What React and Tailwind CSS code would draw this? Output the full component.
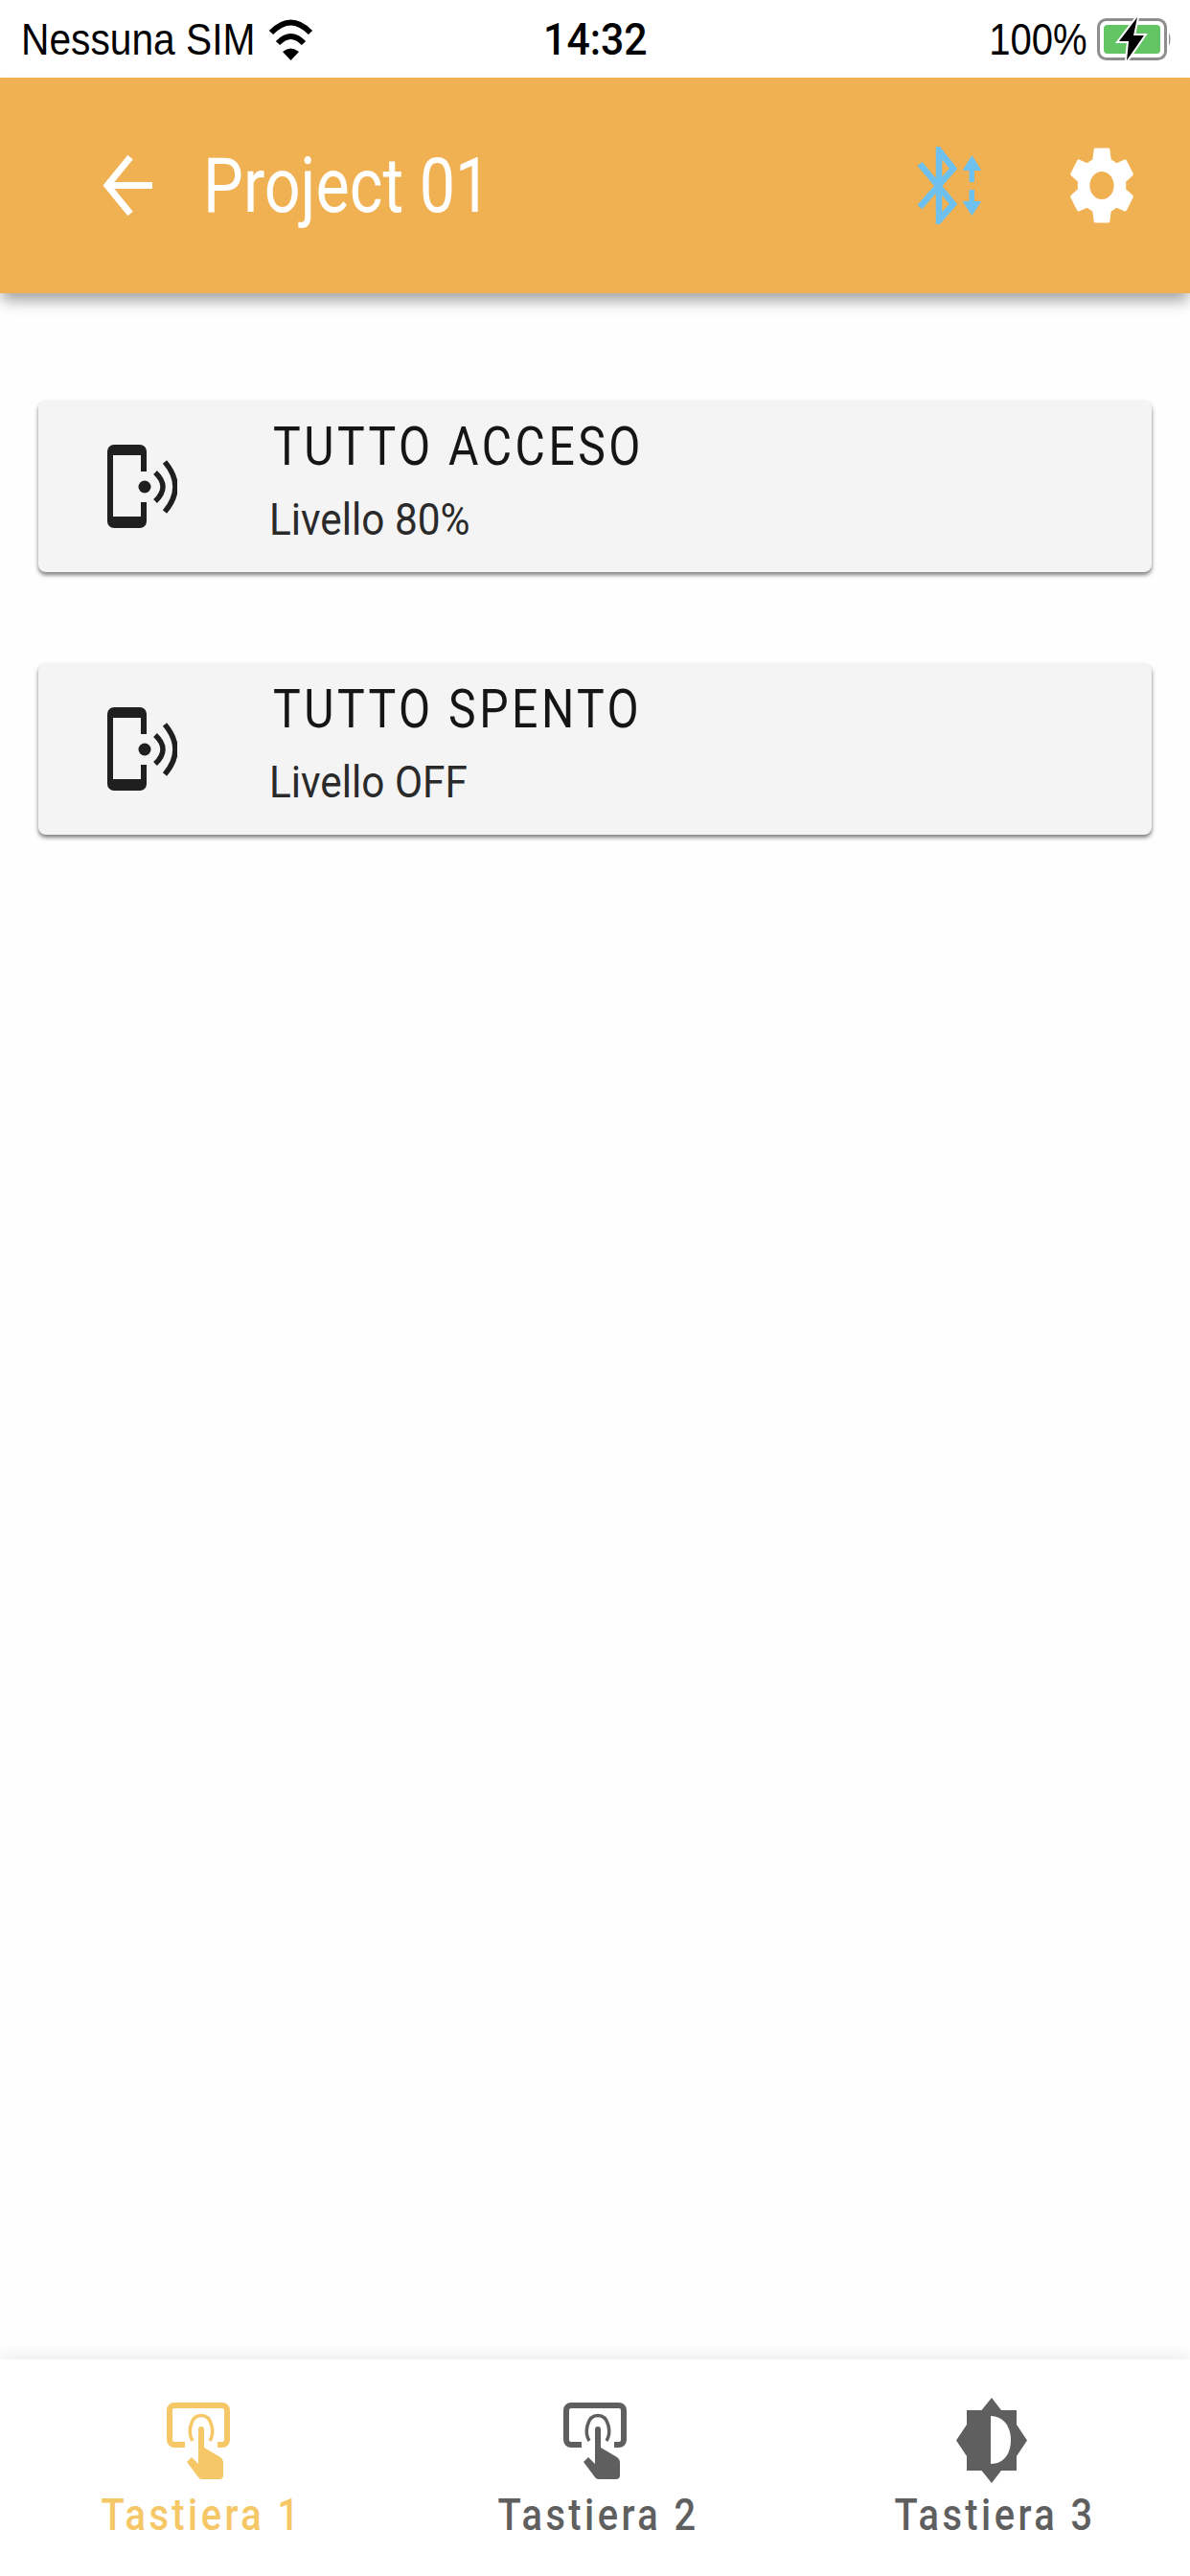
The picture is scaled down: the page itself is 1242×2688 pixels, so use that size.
import React from 'react'

const roboto = 'font-[Roboto,sans-serif]'
const helvetica = "font-['Liberation_Sans',Arial,sans-serif]"

function Wifi() {
  return (
    <svg width="49" height="44" viewBox="0 0 49 44" className="ml-[20px]">
      <path d="M4 15Q24.5 -6 45 15" fill="none" stroke="#000" strokeWidth="6" />
      <path d="M11 26Q24.5 12 38 26" fill="none" stroke="#000" strokeWidth="6" />
      <path d="M16 35Q24.5 28 33 35L24.5 44Z" fill="#000" />
    </svg>
  )
}

function Battery() {
  return (
    <svg width="79" height="46" viewBox="0 0 79 46" className="ml-[10px]">
      <rect x="1.5" y="2.5" width="70" height="41" rx="8" fill="#fff" stroke="#8e8e8e" strokeWidth="3" />
      <path d="M75 16Q78 23 75 30Z" fill="#8e8e8e" />
      <rect x="7" y="8" width="59" height="30" rx="4" fill="#62c462" />
      <path d="M42 0L23 25H33L31 45L49 19H38Z" fill="#000" stroke="#fff" strokeWidth="4" paintOrder="stroke" />
    </svg>
  )
}

function BackArrow() {
  return (
    <svg width="52" height="63" viewBox="0 0 52 63" fill="none" stroke="#fff" strokeWidth="7">
      <path d="M52 31.5H6" />
      <path d="M29 2L5 31.5L29 61" />
    </svg>
  )
}

function BluetoothIcon() {
  return (
    <svg width="67" height="81" viewBox="0 0 67 81" fill="none" stroke="#6ec1ee" strokeWidth="6.5">
      <path d="M3 18L38 60L23 77V4L38 23L3 63" />
      <path d="M47.5 25L57.4 9L67.3 25H60V37H54.5V25Z" fill="#6ec1ee" stroke="none" />
      <path d="M47.5 57L57.4 72L67.3 57H60V45H54.5V57Z" fill="#6ec1ee" stroke="none" />
    </svg>
  )
}

function Gear() {
  return (
    <svg width="66" height="81" viewBox="2.6 2 18.8 20" preserveAspectRatio="none" fill="#fff">
      <path d="M19.14 12.94c.04-.3.06-.61.06-.94 0-.32-.02-.64-.07-.94l2.03-1.58c.18-.14.23-.41.12-.61l-1.92-3.32c-.12-.22-.37-.29-.59-.22l-2.39.96c-.5-.38-1.03-.7-1.62-.94l-.36-2.54c-.04-.24-.24-.41-.48-.41h-3.84c-.24 0-.43.17-.47.41l-.36 2.54c-.59.24-1.13.57-1.62.94l-2.39-.96c-.22-.08-.47 0-.59.22L2.74 8.87c-.12.21-.08.47.12.61l2.03 1.58c-.05.3-.09.63-.09.94s.02.64.07.94l-2.03 1.58c-.18.14-.23.41-.12.61l1.92 3.32c.12.22.37.29.59.22l2.39-.96c.5.38 1.03.7 1.62.94l.36 2.54c.05.24.24.41.48.41h3.84c.24 0 .44-.17.47-.41l.36-2.54c.59-.24 1.13-.56 1.62-.94l2.39.96c.22.08.47 0 .59-.22l1.92-3.32c.12-.22.07-.47-.12-.61l-2.01-1.58zM12 15.6c-1.98 0-3.6-1.62-3.6-3.6s1.62-3.6 3.6-3.6 3.6 1.62 3.6 3.6-1.62 3.6-3.6 3.6z" />
    </svg>
  )
}

function PhoneRing() {
  return (
    <svg width="74" height="90" viewBox="0 0 74 90" className="shrink-0">
      <path d="M8 1H35a7 7 0 0 1 7 7V29H36V12H7V76H36V61H42V81a7 7 0 0 1-7 7H8a7 7 0 0 1-7-7V8a7 7 0 0 1 7-7Z" fill="#1f1f1f" />
      <circle cx="40" cy="45" r="6.5" fill="#1f1f1f" />
      <path d="M51 30Q67 45 51 60" fill="none" stroke="#1f1f1f" strokeWidth="5.5" />
      <path d="M61 19Q83 45 61 71" fill="none" stroke="#1f1f1f" strokeWidth="5.5" />
    </svg>
  )
}

function TouchIcon({ color }) {
  return (
    <svg width="66" height="80" viewBox="0 0 66 80">
      <path d="M19 44H8a5 5 0 0 1-5-5V8a5 5 0 0 1 5-5H58a5 5 0 0 1 5 5V39a5 5 0 0 1-5 5H53" fill="none" stroke={color} strokeWidth="6" />
      <path d="M27 40C22 32 24 13.5 36 13.5C48 13.5 50 32 45 40" fill="none" stroke={color} strokeWidth="3.5" />
      <path d="M33 28a3 3 0 0 1 6 0V47L56 57Q59 59 59 62V76Q59 80 55 80H37Q34 80 33 78L21 62L26 57L33 64Z" fill={color} />
    </svg>
  )
}

function BrightnessIcon() {
  return (
    <svg width="74" height="89" viewBox="0 0 74 89">
      <path d="M37 0L47 13H63V28L74 44.5L63 61V76H47L37 89L26.5 76H11V61L0 44.5L11 28V13H26.5Z" fill="#5f5f5f" />
      <path d="M36 19C50 19 57 31 57 44C57 58 50 69 36 69Z" fill="#fff" />
    </svg>
  )
}

function Card({ title, level }) {
  return (
    <div className="flex h-[179px] items-center rounded-lg bg-[#f4f4f4] pl-[71px] shadow-[0_3px_4px_rgba(0,0,0,0.5)]">
      <PhoneRing />
      <div className={`mb-[12px] ml-[96px] flex flex-col ${roboto}`}>
        <span className="ml-[4px] block origin-left scale-x-[0.875] whitespace-nowrap text-[55px] leading-[60px] tracking-[4px] text-[#151515]">{title}</span>
        <span className="mt-[20px] block origin-left scale-x-[0.92] whitespace-nowrap text-[46px] leading-[52px] text-[#2a2a2a]">{level}</span>
      </div>
    </div>
  )
}

function NavItem({ icon, label, active }) {
  return (
    <div className="flex flex-col items-center">
      <div className="flex h-[89px] items-center">{icon}</div>
      <span className={`ml-[7px] mt-[6px] block scale-x-[0.865] whitespace-nowrap text-[46px] font-medium leading-[54px] tracking-[4px] ${roboto} ${active ? 'text-[#f6c766]' : 'text-[#5f5f5f]'}`}>{label}</span>
    </div>
  )
}

export default function App() {
  return (
    <div className="flex h-[2688px] w-[1242px] flex-col overflow-hidden bg-[#fefefe]">
      {/* Status bar */}
      <div className="grid h-[81px] shrink-0 grid-cols-[1fr_auto_1fr] items-center bg-white pl-[22px] pr-[18px]">
        <div className="flex items-center">
          <span className={`block w-[237px] origin-left scale-x-[0.885] whitespace-nowrap text-[46px] leading-none text-black ${helvetica}`}>Nessuna SIM</span>
          <Wifi />
        </div>
        <span className={`mr-[4px] block scale-x-[0.93] text-[46px] font-medium leading-none text-black ${roboto}`}>14:32</span>
        <div className="flex items-center justify-end">
          <span className={`block origin-right scale-x-[0.87] whitespace-nowrap text-[46px] leading-none text-black ${helvetica}`}>100%</span>
          <Battery />
        </div>
      </div>

      {/* Header */}
      <div className="relative z-10 flex h-[225px] shrink-0 items-center bg-[#f0b153] pl-[107px] pr-[59px] shadow-[0_10px_14px_-2px_rgba(0,0,0,0.35)]">
        <BackArrow />
        <span className={`ml-[53px] block origin-left scale-x-[0.83] whitespace-nowrap text-[80px] leading-none text-white ${roboto}`}>Project 01</span>
        <div className="ml-auto flex items-center gap-[93px]">
          <BluetoothIcon />
          <Gear />
        </div>
      </div>

      {/* Scenes */}
      <div className="flex flex-1 flex-col gap-[95px] px-[40px] pt-[112px]">
        <Card title="TUTTO ACCESO" level="Livello 80%" />
        <Card title="TUTTO SPENTO" level="Livello OFF" />
      </div>

      {/* Bottom tabs */}
      <div className="grid h-[226px] shrink-0 grid-cols-3 bg-white pt-[40px] shadow-[0_-6px_14px_rgba(0,0,0,0.06)]">
        <NavItem active icon={<TouchIcon color="#f6c766" />} label="Tastiera 1" />
        <NavItem icon={<TouchIcon color="#5f5f5f" />} label="Tastiera 2" />
        <NavItem icon={<BrightnessIcon />} label="Tastiera 3" />
      </div>
    </div>
  )
}
